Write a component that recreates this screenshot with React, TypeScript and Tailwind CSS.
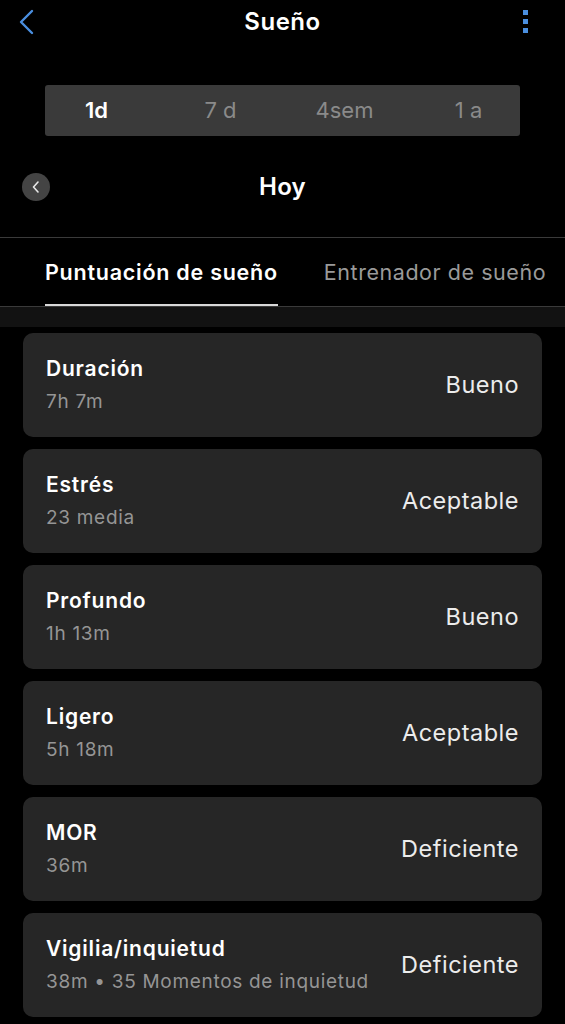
import React from "react";

const rows = [
  { t: "Duración", s: "7h 7m", r: "Bueno" },
  { t: "Estrés", s: "23 media", r: "Aceptable" },
  { t: "Profundo", s: "1h 13m", r: "Bueno" },
  { t: "Ligero", s: "5h 18m", r: "Aceptable" },
  { t: "MOR", s: "36m", r: "Deficiente" },
  { t: "Vigilia/inquietud", s: "38m • 35 Momentos de inquietud", r: "Deficiente" },
];

export default function App() {
  return (
    <div className="w-[565px] min-h-[1024px] bg-black text-white overflow-hidden" style={{ fontFamily: "Inter, 'Noto Sans', sans-serif" }}>
      {/* header */}
      <div className="relative h-[44px] flex items-center justify-center">
        <svg className="absolute left-[17px] top-[9px]" width="20" height="26" viewBox="0 0 20 26" fill="none">
          <path d="M15 2 L4 13 L15 24" stroke="#4a8fe0" strokeWidth="2.4" strokeLinecap="round" strokeLinejoin="round" />
        </svg>
        <span className="text-[24px] font-semibold tracking-[0.5px]">Sueño</span>
        <div className="absolute left-[523px] top-[10px] flex flex-col gap-[4px]">
          <div className="w-[5px] h-[5px] bg-[#4a8fe0]" />
          <div className="w-[5px] h-[5px] bg-[#4a8fe0]" />
          <div className="w-[5px] h-[5px] bg-[#4a8fe0]" />
        </div>
      </div>

      {/* segmented */}
      <div className="mt-[41px] mx-[45px] h-[51px] bg-[#3a3a3a] rounded-[3px] flex items-center justify-center text-[22px]">
        <div className="w-[124px] shrink-0 text-center font-semibold text-white">1d</div>
        <div className="w-[124px] shrink-0 text-center text-[#8a8a8a]">7 d</div>
        <div className="w-[124px] shrink-0 text-center text-[#8a8a8a]">4sem</div>
        <div className="w-[124px] shrink-0 text-center text-[#8a8a8a]">1 a</div>
      </div>

      {/* Hoy row */}
      <div className="relative mt-[22px] h-[58px] flex items-center justify-center">
        <div className="absolute left-[22px] top-[15px] w-[28px] h-[28px] rounded-full bg-[#444444] flex items-center justify-center">
          <svg width="10" height="14" viewBox="0 0 10 14" fill="none">
            <path d="M7 2 L2.5 7 L7 12" stroke="#e8e8e8" strokeWidth="1.6" strokeLinecap="round" strokeLinejoin="round" />
          </svg>
        </div>
        <span className="text-[24px] font-semibold tracking-[0.3px]">Hoy</span>
      </div>

      {/* tabs */}
      <div className="mt-[21px] border-t border-[#3a3a3a] border-b">
        <div className="h-[68px] flex items-stretch pl-[45px] gap-[46px] whitespace-nowrap">
          <div className="relative flex items-center pt-[1px] text-[21.5px] font-semibold text-white tracking-[0.75px]">
            Puntuación de sueño
            <div className="absolute left-0 right-0 bottom-0 h-[2px] bg-[#d8d8d8]" />
          </div>
          <div className="flex items-center pt-[1px] text-[21.5px] text-[#9a9a9a] tracking-[0.55px]">Entrenador de sueño</div>
        </div>
      </div>
      <div className="h-[20px] bg-[#121212]" />

      {/* cards */}
      <div className="pt-[6px] px-[23px] flex flex-col gap-[12px]">
        {rows.map((r) => (
          <div key={r.t} className="h-[104px] rounded-[10px] bg-[#262626] px-[23px] flex items-center justify-between">
            <div className="flex flex-col">
              <div className="text-[21px] font-semibold text-white leading-[28px] tracking-[0.8px]">{r.t}</div>
              <div className="text-[19px] text-[#959595] leading-[26px] mt-[6px] tracking-[0.7px]">{r.s}</div>
            </div>
            <div className="text-[23.5px] text-[#ececec] tracking-[0.5px]">{r.r}</div>
          </div>
        ))}
      </div>
    </div>
  );
}
